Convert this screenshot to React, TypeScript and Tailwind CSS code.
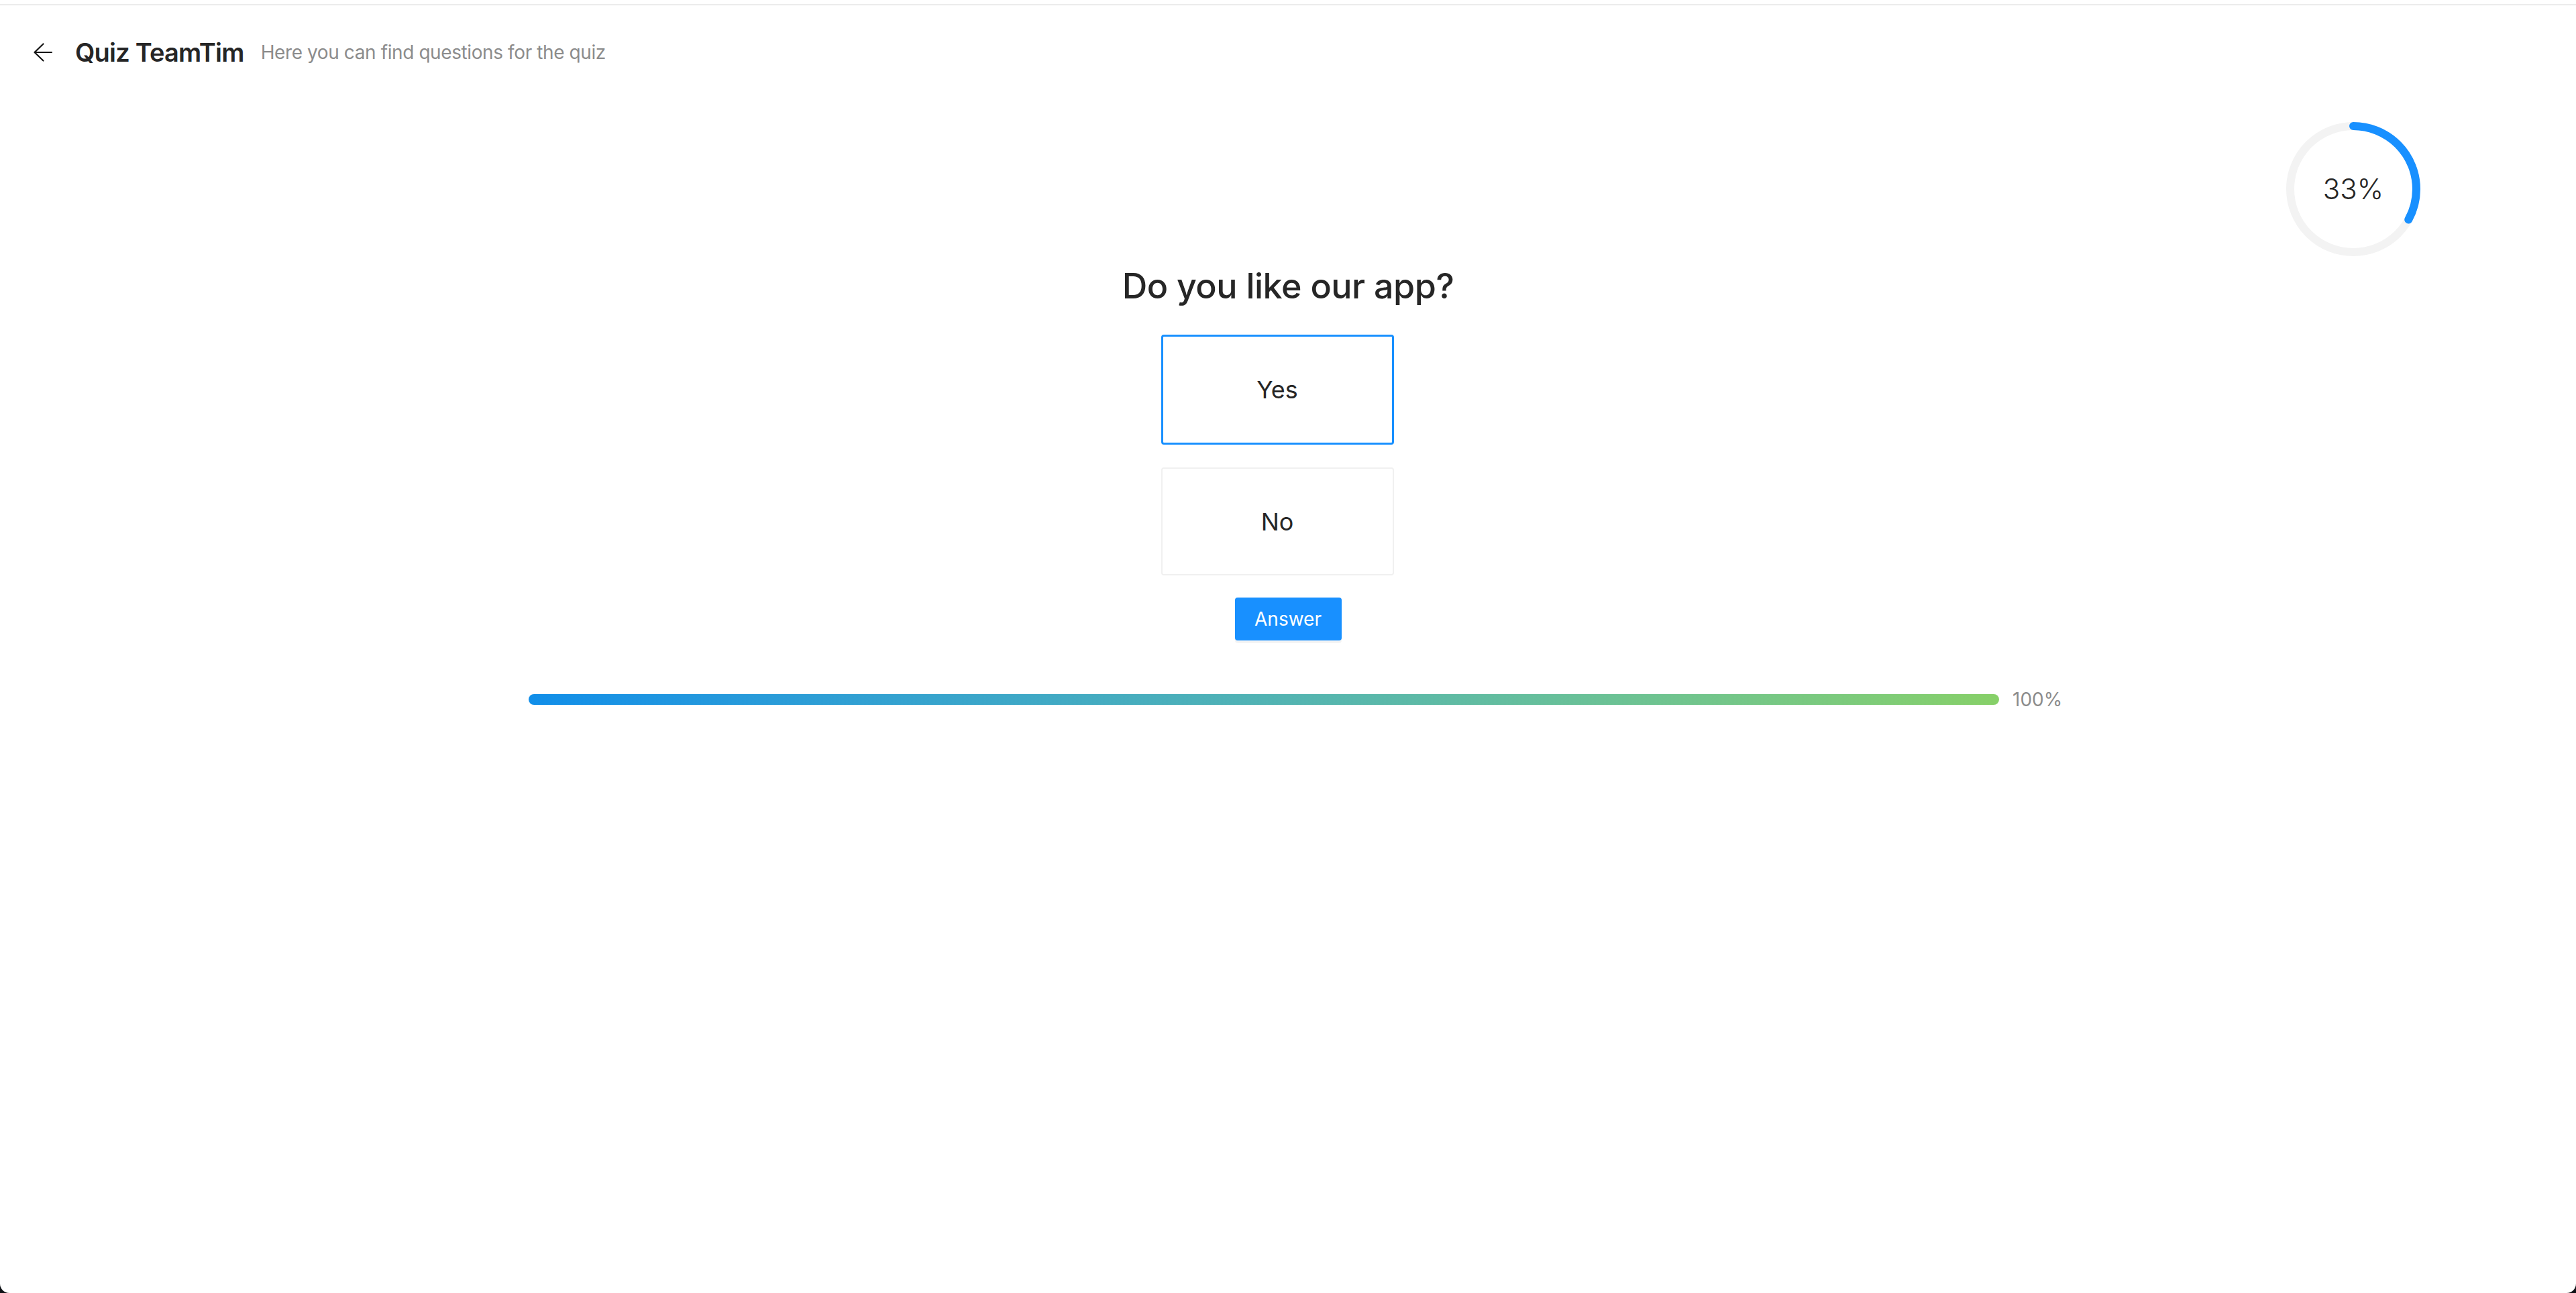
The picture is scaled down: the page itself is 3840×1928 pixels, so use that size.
import React from "react";

function BackArrow() {
  return (
    <svg width="32" height="32" viewBox="0 0 32 32" fill="none" className="shrink-0">
      <path d="M29 16 H4.5" stroke="#141414" strokeWidth="2.2" strokeLinecap="round" />
      <path d="M16.5 3.5 L3.5 16 L16.5 28.5" stroke="#141414" strokeWidth="2.2" strokeLinecap="round" strokeLinejoin="round" />
    </svg>
  );
}

function CircleProgress({ percent }: { percent: number }) {
  const r = 47;
  const c = 2 * Math.PI * r;
  const len = (percent / 100) * c;
  return (
    <div className="relative w-[200px] h-[200px]">
      <svg width="200" height="200" viewBox="0 0 100 100">
        <circle cx="50" cy="50" r={r} fill="none" stroke="#f3f3f3" strokeWidth="6" />
        <circle
          cx="50"
          cy="50"
          r={r}
          fill="none"
          stroke="#1890ff"
          strokeWidth="6"
          strokeLinecap="round"
          strokeDasharray={`${len} ${c}`}
          transform="rotate(-90 50 50)"
        />
      </svg>
      <div className="absolute inset-0 flex items-center justify-center text-[42px] font-light text-[#262626] leading-none">
        {percent}%
      </div>
    </div>
  );
}

export default function App() {
  return (
    <div className="h-screen bg-[#0f1115] font-['Inter',sans-serif]">
      <div className="h-full bg-white rounded-b-[14px] pt-[6px]">
        <div className="border-t-2 border-[#ececec]">
          <div className="h-[140px] flex items-center pl-[48px]">
            <BackArrow />
            <div className="ml-[32px] text-[38px] font-semibold text-[#262626] tracking-[-0.8px]">
              Quiz TeamTim
            </div>
            <div className="ml-[25px] text-[28px] text-[#8c8c8c] tracking-[-0.4px]">
              Here you can find questions for the quiz
            </div>
          </div>

          <div className="pt-[34px]">
            <div className="flex justify-end pr-[232px]">
              <CircleProgress percent={33} />
            </div>

            <h1 className="mt-[13px] text-center text-[52px] leading-[64px] font-medium text-[#262626] tracking-[-0.5px]">
              Do you like our app?
            </h1>

            <div className="mt-[40px] flex flex-col items-center gap-[34px] pr-[32px]">
              <div className="w-[347px] h-[164px] rounded-[4px] border-[3px] border-[#1890ff] flex items-center justify-center text-[36px] text-[#262626]">
                Yes
              </div>
              <div className="w-[347px] h-[161px] rounded-[4px] border-2 border-[#f0f0f0] flex items-center justify-center text-[36px] text-[#262626]">
                No
              </div>
            </div>

            <div className="mt-[33px] flex justify-center">
              <button className="w-[159px] h-[64px] rounded-[4px] bg-[#1890ff] text-white text-[28px] shadow-[0_4px_0_rgba(0,0,0,0.045)]">
                Answer
              </button>
            </div>

            <div className="mt-[66px] mx-auto w-[2264px] h-[44px] flex items-center">
              <div className="flex-1 h-[16px] rounded-full bg-gradient-to-r from-[#108ee9] to-[#87d068]" />
              <div className="ml-[20px] w-[52px] whitespace-nowrap text-[28px] text-[#8c8c8c]">100%</div>
            </div>
          </div>
        </div>
      </div>
    </div>
  );
}
